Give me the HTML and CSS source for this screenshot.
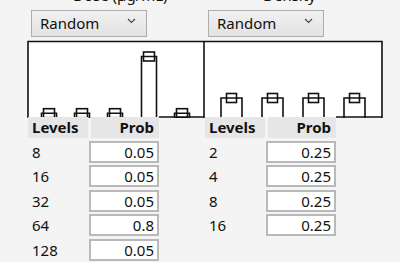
FILE: index.html
```html
<!DOCTYPE html>
<html lang="en">
  <head>
    <meta charset="UTF-8" />
    <title>Factor levels</title>
    <link rel="stylesheet" href="styles.css">
  </head>
  <body>
    <!-- Dropdowns with their factor names -->
    <div class="controls">
      <div class="group group-left">
        <div class="label">Dose (µg/mL)</div>
        <div class="dropdown">
          <span>Random</span>
          <svg class="chevron" width="9" height="6" viewBox="0 0 9 6"><path d="M1 1 L4.5 4.5 L8 1" fill="none" stroke="#444" stroke-width="1.1"/></svg>
        </div>
      </div>
      <div class="group group-right">
        <div class="label">Density</div>
        <div class="dropdown">
          <span>Random</span>
          <svg class="chevron" width="9" height="6" viewBox="0 0 9 6"><path d="M1 1 L4.5 4.5 L8 1" fill="none" stroke="#444" stroke-width="1.1"/></svg>
        </div>
      </div>
    </div>

    <!-- Probability bars -->
    <svg class="chart" width="357" height="78" viewBox="0 0 357 78">
      <rect x="1" y="1.5" width="354" height="77" fill="#fff"/>
      <g fill="none" stroke="#111" stroke-width="1.6">
        <path d="M1 78 V1.5 H355 V78"/>
        <path d="M177 1.5 V78"/>
        <path d="M132 77 H177"/>
        <path d="M309 77 H355"/>
        <!-- left: 0.05 0.05 0.05 0.8 0.05 -->
        <path d="M14.5 78 V73.2 H29.5 V78"/><rect x="16.5" y="68.7" width="11" height="9"/>
        <path d="M47.5 78 V73.2 H62.5 V78"/><rect x="49.5" y="68.7" width="11" height="9"/>
        <path d="M80.5 78 V73.2 H95.5 V78"/><rect x="82.5" y="68.7" width="11" height="9"/>
        <path d="M114.5 78 V16.5 H129.5 V78"/><rect x="116.5" y="12" width="11" height="9"/>
        <path d="M147.5 78 V73.2 H162.5 V78"/><rect x="149.5" y="68.7" width="11" height="9"/>
        <!-- right: 0.25 each -->
        <path d="M194 78 V58 H215 V78"/><rect x="199.5" y="53.5" width="10" height="9"/>
        <path d="M235 78 V58 H256 V78"/><rect x="240.5" y="53.5" width="10" height="9"/>
        <path d="M276 78 V58 H297 V78"/><rect x="281.5" y="53.5" width="10" height="9"/>
        <path d="M317 78 V58 H338 V78"/><rect x="322.5" y="53.5" width="10" height="9"/>
      </g>
    </svg>

    <!-- Level tables -->
    <div class="tables">
      <div class="levels">
        <div class="head">Levels</div><div class="head prob">Prob</div>
        <div class="level">8</div><div class="value">0.05</div>
        <div class="level">16</div><div class="value">0.05</div>
        <div class="level">32</div><div class="value">0.05</div>
        <div class="level">64</div><div class="value">0.8</div>
        <div class="level">128</div><div class="value">0.05</div>
      </div>
      <div class="levels levels-right">
        <div class="head">Levels</div><div class="head prob">Prob</div>
        <div class="level">2</div><div class="value">0.25</div>
        <div class="level">4</div><div class="value">0.25</div>
        <div class="level">8</div><div class="value">0.25</div>
        <div class="level">16</div><div class="value">0.25</div>
      </div>
    </div>
  </body>
</html>
```

FILE: styles.css
```css
body {
  margin: 0;
  background: #f4f4f4;
  font-family: "Noto Sans", "Open Sans", sans-serif;
  font-size: 15px;
  color: #111;
  overflow: hidden;
}

/* Dropdown row */
.controls {
  display: flex;
  padding-left: 31px;
}

.group {
  width: 116px;
}

.group-right {
  margin-left: 61px;
}

.label {
  margin-top: -15px;
  height: 25px;
  line-height: 20px;
  white-space: nowrap;
}

.group-left .label {
  padding-left: 42px;
}

.group-right .label {
  padding-left: 55px;
}

.dropdown {
  box-sizing: border-box;
  height: 27px;
  border: 1px solid #adadad;
  background: linear-gradient(#f0f0f0, #e3e3e3);
  display: flex;
  align-items: center;
  justify-content: space-between;
  padding: 0 10px 2px 8px;
}

.chevron {
  margin-bottom: 4px;
}

/* Chart */
.chart {
  display: block;
  margin: 3px 0 0 27px;
}

/* Tables */
.tables {
  display: flex;
  margin-top: -1px;
  padding-left: 28px;
}

.levels {
  display: grid;
  grid-template-columns: 61px 70px;
  grid-template-rows: 21px;
  grid-auto-rows: 22px;
  row-gap: 2.5px;
}

.levels-right {
  margin-left: 46px;
}

.head {
  background: #e6e6e6;
  font-weight: bold;
  line-height: 21px;
  padding-left: 4px;
  width: 60px;
  box-sizing: border-box;
}

.head.prob {
  width: 68px;
  margin-left: 2px;
  padding: 0 5px 0 0;
  text-align: right;
}

.level {
  line-height: 22px;
  padding-left: 4px;
}

.value {
  box-sizing: border-box;
  background: #fff;
  border: 2px solid #b9b9b9;
  line-height: 18px;
  text-align: right;
  padding-right: 3px;
}
```
